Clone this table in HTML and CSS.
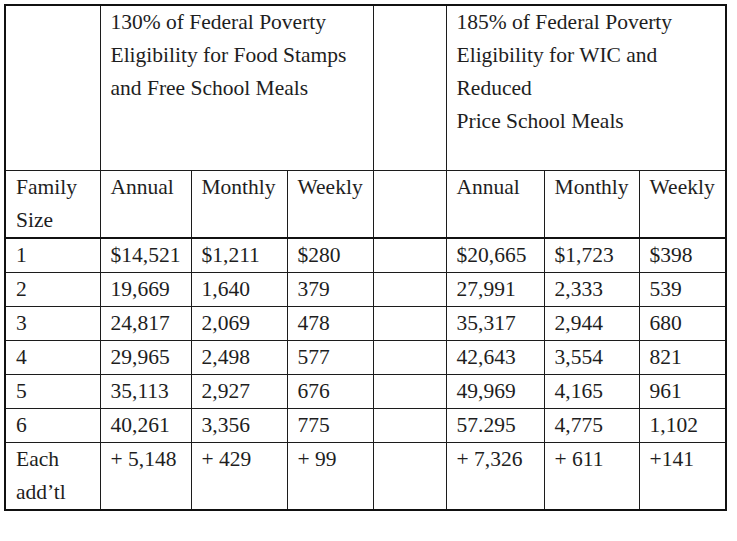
FILE: index.html
```html
<!DOCTYPE html>
<html>
<head>
<meta charset="utf-8">
<link rel="stylesheet" href="styles.css">
</head>
<body>
<table class="grid">
  <colgroup>
    <col class="c1"><col class="c2"><col class="c3"><col class="c4"><col class="c5"><col class="c6"><col class="c7"><col class="c8">
  </colgroup>
  <tr class="r-head">
    <td></td>
    <td colspan="3">130% of Federal Poverty<br>Eligibility for Food Stamps<br>and Free School Meals</td>
    <td></td>
    <td colspan="3">185% of Federal Poverty<br>Eligibility for WIC and<br>Reduced<br>Price School Meals</td>
  </tr>
  <tr class="r-sub">
    <td>Family<br>Size</td>
    <td>Annual</td>
    <td>Monthly</td>
    <td>Weekly</td>
    <td></td>
    <td>Annual</td>
    <td>Monthly</td>
    <td>Weekly</td>
  </tr>
  <tr class="r-data"><td>1</td><td>$14,521</td><td>$1,211</td><td>$280</td><td></td><td>$20,665</td><td>$1,723</td><td>$398</td></tr>
  <tr class="r-data"><td>2</td><td>19,669</td><td>1,640</td><td>379</td><td></td><td>27,991</td><td>2,333</td><td>539</td></tr>
  <tr class="r-data"><td>3</td><td>24,817</td><td>2,069</td><td>478</td><td></td><td>35,317</td><td>2,944</td><td>680</td></tr>
  <tr class="r-data"><td>4</td><td>29,965</td><td>2,498</td><td>577</td><td></td><td>42,643</td><td>3,554</td><td>821</td></tr>
  <tr class="r-data"><td>5</td><td>35,113</td><td>2,927</td><td>676</td><td></td><td>49,969</td><td>4,165</td><td>961</td></tr>
  <tr class="r-data"><td>6</td><td>40,261</td><td>3,356</td><td>775</td><td></td><td>57.295</td><td>4,775</td><td>1,102</td></tr>
  <tr class="r-last"><td>Each<br>add’tl</td><td>+ 5,148</td><td>+ 429</td><td>+ 99</td><td></td><td>+ 7,326</td><td>+ 611</td><td>+141</td></tr>
</table>
</body>
</html>
```
FILE: styles.css
```css
html, body {
  margin: 0;
  background: #ffffff;
}
body {
  padding: 4px 0 0 4px;
  font-family: "Liberation Serif", "DejaVu Serif", serif;
  font-size: 21.5px;
  color: #1e1e1e;
}
.grid {
  border-collapse: collapse;
  table-layout: fixed;
  width: 723px;
  border: 2px solid #111111;
}
.c1 { width: 95px; }
.c2 { width: 91px; }
.c3 { width: 96px; }
.c4 { width: 86px; }
.c5 { width: 73px; }
.c6 { width: 98px; }
.c7 { width: 95px; }
.c8 { width: 87px; }
.grid td {
  border: 1px solid #1c1c1c;
  padding: 0 0 0 10px;
  vertical-align: top;
  line-height: 33px;
  white-space: nowrap;
  overflow: hidden;
}
.r-head td { height: 164px; }
.r-sub td { height: 66px; border-bottom: 2px solid #111111; }
.r-data td { height: 33px; }
.r-last td { height: 66px; }
```
